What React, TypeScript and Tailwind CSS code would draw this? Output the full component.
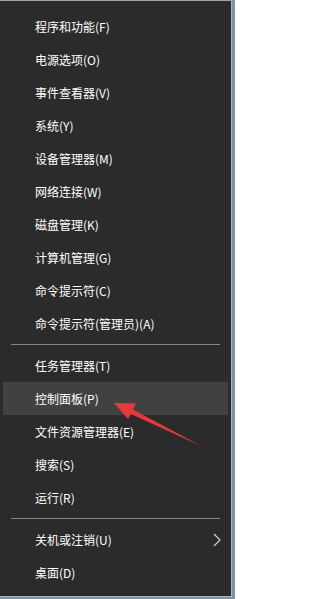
const groupOne = [
  '程序和功能(F)',
  '电源选项(O)',
  '事件查看器(V)',
  '系统(Y)',
  '设备管理器(M)',
  '网络连接(W)',
  '磁盘管理(K)',
  '计算机管理(G)',
  '命令提示符(C)',
  '命令提示符(管理员)(A)',
];

const groupTwo = ['任务管理器(T)', '控制面板(P)', '文件资源管理器(E)', '搜索(S)', '运行(R)'];

const groupThree = ['关机或注销(U)', '桌面(D)'];

function MenuItem({ label, active, submenu }: { label: string; active?: boolean; submenu?: boolean }) {
  return (
    <div
      className={`h-[33px] mx-[3px] pl-[32px] pr-[7px] flex items-center justify-between text-[12px] text-white ${
        active ? 'bg-[#414141]' : ''
      }`}
    >
      <span>{label}</span>
      {submenu && (
        <svg width="8" height="14" viewBox="0 0 8 14" className="text-[#d0d0d0]">
          <polyline points="1,1 7,7 1,13" fill="none" stroke="currentColor" strokeWidth="1.2" />
        </svg>
      )}
    </div>
  );
}

function Separator() {
  return (
    <div className="h-[9px] pt-[4px] px-[11px]">
      <div className="h-px bg-[#858585]" />
    </div>
  );
}

export default function App() {
  return (
    <div
      className="relative w-[235px] h-[599px] bg-[#7d93a6] overflow-hidden"
      style={{ fontFamily: '"Microsoft YaHei", "Noto Sans CJK SC", "Noto Sans", sans-serif' }}
    >
      <div className="w-[232px] h-[597px] bg-[#2b2b2b] border-t border-t-[#9aa7b2] border-r border-r-[#b5b5b5] border-b border-b-[#b5b5b5] pt-[9px]">
        {groupOne.map(l => (
          <MenuItem key={l} label={l} />
        ))}
        <Separator />
        {groupTwo.map(l => (
          <MenuItem key={l} label={l} active={l === '控制面板(P)'} />
        ))}
        <Separator />
        {groupThree.map(l => (
          <MenuItem key={l} label={l} submenu={l === '关机或注销(U)'} />
        ))}
      </div>

      {/* annotation arrow */}
      <svg className="absolute left-0 top-0 pointer-events-none" width="235" height="599" viewBox="0 0 235 599">
        <polygon
          points="114,403 136,403.5 133,409.6 201,446 130.9,414 128,419"
          fill="#e8393a"
        />
      </svg>
    </div>
  );
}
